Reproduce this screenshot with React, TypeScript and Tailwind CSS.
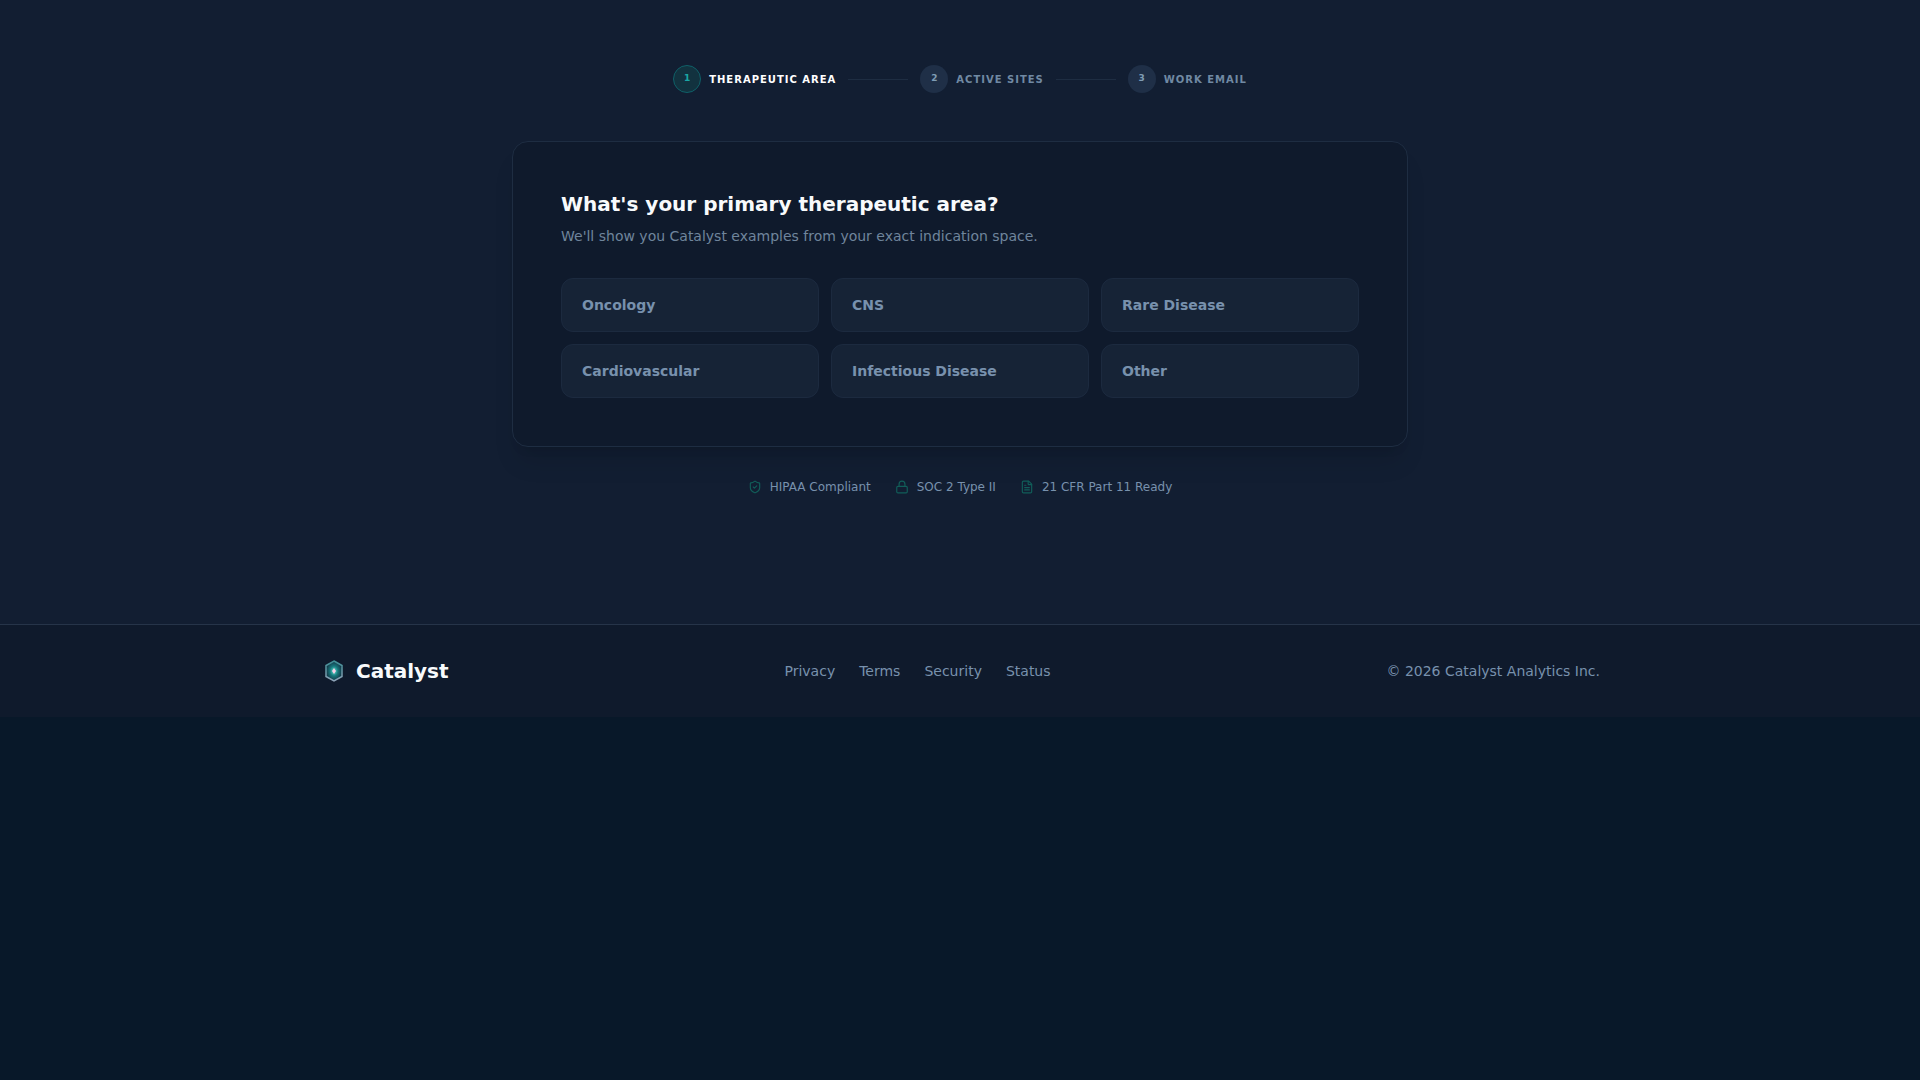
import { FileText, Lock, ShieldCheck } from "lucide-react";

const steps = [
  { n: 1, label: "Therapeutic Area", active: true },
  { n: 2, label: "Active Sites", active: false },
  { n: 3, label: "Work Email", active: false },
];

const areas = ["Oncology", "CNS", "Rare Disease", "Cardiovascular", "Infectious Disease", "Other"];

const badges = [
  { icon: ShieldCheck, label: "HIPAA Compliant" },
  { icon: Lock, label: "SOC 2 Type II" },
  { icon: FileText, label: "21 CFR Part 11 Ready" },
];

const links = ["Privacy", "Terms", "Security", "Status"];

function Logo() {
  return (
    <svg width="28" height="28" viewBox="0 0 28 28" fill="none">
      <defs>
        <radialGradient id="logo-fill" cx="50%" cy="50%" r="55%">
          <stop offset="0%" stopColor="#5eead4" />
          <stop offset="45%" stopColor="#17777c" />
          <stop offset="100%" stopColor="#12283a" />
        </radialGradient>
        <linearGradient id="logo-stroke" x1="0" y1="0" x2="0" y2="1">
          <stop offset="0%" stopColor="#3f8f96" />
          <stop offset="100%" stopColor="#8fa3b8" />
        </linearGradient>
      </defs>
      <path d="M14 4 22 8.500v11L14 24l-8-4.500v-11z" fill="url(#logo-fill)" stroke="url(#logo-stroke)" strokeWidth="1.5" />
      <path d="M14 11l2 3-2 3-2-3z" fill="#fbcfe8" />
    </svg>
  );
}

export default function App() {
  return (
    <div className="min-h-screen bg-[#081829] font-['DejaVu_Sans',sans-serif]">
      <main className="flex h-[624px] flex-col items-center bg-[#121e32] pt-[65px]">
        <div className="flex items-center gap-3">
          {steps.map((step, i) => (
            <div key={step.n} className="flex items-center gap-3">
              {i > 0 && <div className="h-px w-[60px] bg-[#1e2d42]" />}
              <div className="flex items-center gap-2">
                <div
                  className={
                    step.active
                      ? "flex size-7 items-center justify-center rounded-full border border-[#0f6068] bg-[#12323f] text-[9px] font-bold text-[#1aa7a7]"
                      : "flex size-7 items-center justify-center rounded-full bg-[#1f2f47] text-[9px] font-bold text-[#7f9cb5]"
                  }
                >
                  {step.n}
                </div>
                <span
                  className={
                    step.active
                      ? "text-[10px] font-bold uppercase tracking-[1px] text-white"
                      : "text-[10px] font-bold uppercase tracking-[1px] text-[#7089a3]"
                  }
                >
                  {step.label}
                </span>
              </div>
            </div>
          ))}
        </div>

        <div className="mt-12 w-[896px] rounded-2xl border border-[#1e2d42] bg-[#0f1a2c] p-12 shadow-xl">
          <h1 className="text-xl font-bold text-[#f8fafc]">What's your primary therapeutic area?</h1>
          <p className="mt-2 text-sm text-[#6f859c]">We'll show you Catalyst examples from your exact indication space.</p>
          <div className="mt-8 grid grid-cols-3 gap-3">
            {areas.map((area) => (
              <div
                key={area}
                className="flex h-[54px] items-center rounded-xl border border-[#1c2a3f] bg-[#162336] px-5 text-sm font-bold text-[#7891ad]"
              >
                {area}
              </div>
            ))}
          </div>
        </div>

        <div className="mt-8 flex items-center gap-6">
          {badges.map(({ icon: Icon, label }) => (
            <div key={label} className="flex items-center gap-2">
              <Icon className="size-3.5 text-[#115e59]" />
              <span className="text-xs text-[#7891ad]">{label}</span>
            </div>
          ))}
        </div>
      </main>

      <footer className="flex h-[93px] justify-center border-t border-[#263449] bg-[#0f1a2c]">
        <div className="flex w-[1280px] items-center justify-between">
          <div className="flex items-center gap-2">
            <Logo />
            <span className="text-xl font-bold text-[#f8fafc]">Catalyst</span>
          </div>
          <nav className="flex items-center gap-6 text-sm text-[#7891ad]">
            {links.map((link) => (
              <a key={link}>{link}</a>
            ))}
          </nav>
          <span className="text-sm text-[#7891ad]">© 2026 Catalyst Analytics Inc.</span>
        </div>
      </footer>
    </div>
  );
}
